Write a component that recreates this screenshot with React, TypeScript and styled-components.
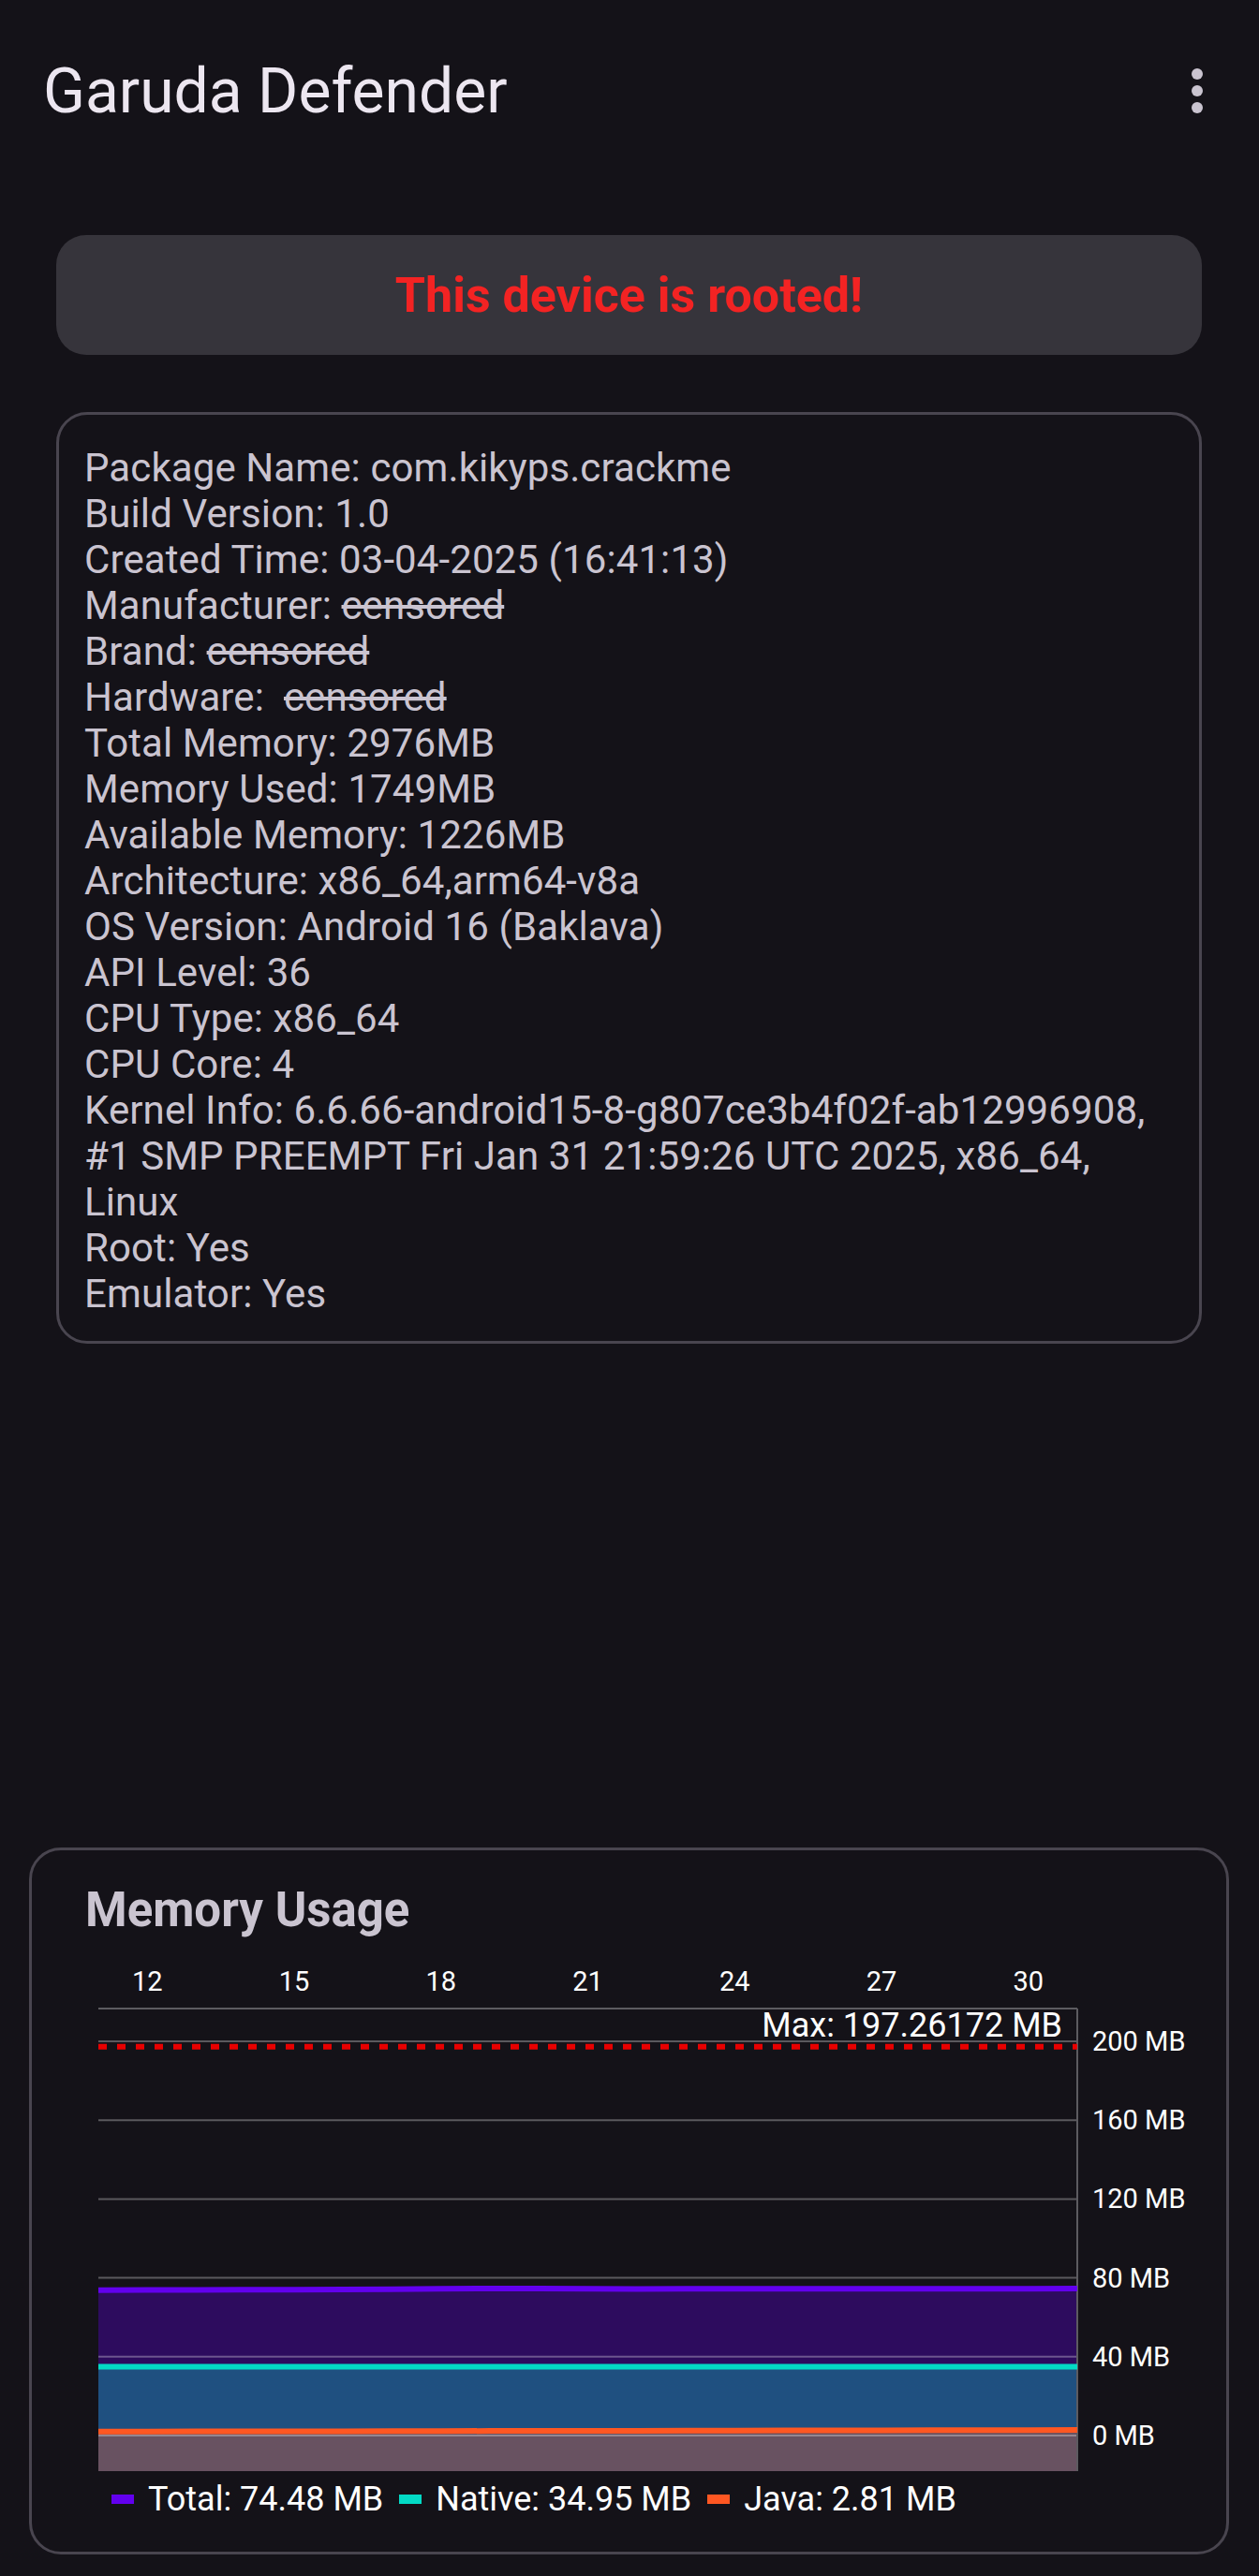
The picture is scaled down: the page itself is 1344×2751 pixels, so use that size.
import styled, { createGlobalStyle } from "styled-components";

const GlobalStyle = createGlobalStyle`
  html, body {
    margin: 0;
    padding: 0;
    background: #141218;
  }
  * {
    box-sizing: border-box;
  }
`;

const Page = styled.div`
  min-height: 2751px;
  display: flex;
  flex-direction: column;
  background: #141218;
  font-family: Roboto, "Noto Sans", sans-serif;
`;

const TopBar = styled.header`
  height: 194px;
  display: flex;
  align-items: center;
  justify-content: space-between;
  padding: 0 60px 0 46px;
`;

const Title = styled.h1`
  margin: 0;
  font-size: 66px;
  font-weight: 400;
  color: #ece6f0;
`;

const MenuButton = styled.div`
  width: 12px;
  height: 48px;
  display: flex;
  align-items: center;
  justify-content: center;
`;

const Content = styled.main`
  padding: 0 61px 0 60px;
  display: flex;
  flex-direction: column;
`;

const Banner = styled.div`
  margin-top: 57px;
  height: 128px;
  border-radius: 32px;
  background: #36343b;
  display: flex;
  align-items: center;
  justify-content: center;
  color: #f32323;
  font-size: 52px;
  font-weight: 700;
`;

const InfoCard = styled.section`
  margin-top: 61px;
  border: 3px solid #49454f;
  border-radius: 33px;
  padding: 32px 26px 26px 27px;
  color: #cac4d0;
  font-size: 42px;
  line-height: 49px;
  letter-spacing: 0.1px;
`;

const InfoLine = styled.div`
  white-space: pre;
`;

const Censored = styled.span`
  text-decoration: line-through;
`;

const MemoryCard = styled.section`
  margin: auto 32px 23px 31px;
  border: 3px solid #49454f;
  border-radius: 34px;
  padding: 35px 30px 35px 54px;
  display: flex;
  flex-direction: column;
`;

const CardTitle = styled.h2`
  margin: 0 0 12px 3px;
  font-size: 51px;
  line-height: 57px;
  font-weight: 700;
  color: #cac4d0;
`;

const ChartSvg = styled.svg`
  display: block;
  width: 1191px;
  height: 565px;
  font-family: Roboto, "Noto Sans", sans-serif;
`;

const Legend = styled.div`
  margin: 3px 0 0 31px;
  display: flex;
  align-items: center;
  gap: 17px;
  font-size: 36px;
  line-height: 42px;
  color: #ffffff;
`;

const LegendItem = styled.div`
  display: flex;
  align-items: center;
  gap: 15px;
`;

const LegendMark = styled.span<{ $color: string }>`
  width: 24px;
  height: 10px;
  background: ${({ $color }) => $color};
`;

const xs = Array.from({ length: 21 }, (_, i) => 11 + i);
const total = [73.8, 73.85, 73.9, 73.95, 74.0, 74.1, 74.25, 74.5, 74.65, 74.55, 74.45, 74.4, 74.42, 74.44, 74.45, 74.45, 74.46, 74.46, 74.47, 74.47, 74.6];
const native = xs.map(() => 34.95);
const java = xs.map((_, i) => 2.0 + (0.81 * i) / 20);

const X = (v: number) => 17 + (v - 11) * 52.25;
const Y = (v: number) => 521 - v * 2.105;
const BOTTOM = 559;

const linePath = (vals: number[]) =>
  vals.map((v, i) => `${i ? "L" : "M"}${X(xs[i]).toFixed(1)} ${Y(v).toFixed(1)}`).join(" ");
const areaPath = (vals: number[]) =>
  `${linePath(vals)} L${X(31)} ${BOTTOM} L${X(11)} ${BOTTOM} Z`;

const series = [
  { name: "Total", value: "74.48 MB", color: "#6200ee", data: total },
  { name: "Native", value: "34.95 MB", color: "#03dac5", data: native },
  { name: "Java", value: "2.81 MB", color: "#ff5722", data: java },
];

const MemoryChart = () => (
  <ChartSvg viewBox="0 0 1191 565">
    {[12, 15, 18, 21, 24, 27, 30].map((t) => (
      <text key={t} x={X(t)} y={46} fill="#fff" fontSize={29} textAnchor="middle">
        {t}
      </text>
    ))}
    {series.map((s) => (
      <path key={s.name + "a"} d={areaPath(s.data)} fill={s.color} fillOpacity={0.33} />
    ))}
    {[0, 40, 80, 120, 160, 200].map((v) => (
      <g key={v}>
        <line x1={17} x2={1062} y1={Y(v)} y2={Y(v)} stroke="#fff" strokeOpacity={0.3} strokeWidth={2} />
        <text x={1078} y={Y(v) + 10} fill="#fff" fontSize={29}>
          {v} MB
        </text>
      </g>
    ))}
    <line x1={17} x2={1062} y1={65} y2={65} stroke="#5c5b60" strokeWidth={2} />
    <line x1={1062} x2={1062} y1={65} y2={BOTTOM} stroke="#5c5b60" strokeWidth={2} />
    {series.map((s) => (
      <path key={s.name + "l"} d={linePath(s.data)} fill="none" stroke={s.color} strokeWidth={6} />
    ))}
    <line x1={17} x2={1062} y1={Y(197.26172)} y2={Y(197.26172)} stroke="#e80000" strokeWidth={6} strokeDasharray="9 11" />
    <text x={1046} y={95} fill="#fff" fontSize={36} textAnchor="end">
      Max: 197.26172 MB
    </text>
  </ChartSvg>
);

const info: [string, string, boolean?][] = [
  ["Package Name: ", "com.kikyps.crackme"],
  ["Build Version: ", "1.0"],
  ["Created Time: ", "03-04-2025 (16:41:13)"],
  ["Manufacturer: ", "censored", true],
  ["Brand: ", "censored", true],
  ["Hardware:  ", "censored", true],
  ["Total Memory: ", "2976MB"],
  ["Memory Used: ", "1749MB"],
  ["Available Memory: ", "1226MB"],
  ["Architecture: ", "x86_64,arm64-v8a"],
  ["OS Version: ", "Android 16 (Baklava)"],
  ["API Level: ", "36"],
  ["CPU Type: ", "x86_64"],
  ["CPU Core: ", "4"],
];

export default function App() {
  return (
    <Page>
      <GlobalStyle />
      <TopBar>
        <Title>Garuda Defender</Title>
        <MenuButton>
          <svg width="12" height="48" viewBox="0 0 12 48">
            <circle cx="6" cy="6" r="6" fill="#cac4d0" />
            <circle cx="6" cy="24" r="6" fill="#cac4d0" />
            <circle cx="6" cy="42" r="6" fill="#cac4d0" />
          </svg>
        </MenuButton>
      </TopBar>
      <Content>
        <Banner>This device is rooted!</Banner>
        <InfoCard>
          {info.map(([label, value, hidden]) => (
            <InfoLine key={label}>
              {label}
              {hidden ? <Censored>{value}</Censored> : value}
            </InfoLine>
          ))}
          <InfoLine>Kernel Info: 6.6.66-android15-8-g807ce3b4f02f-ab12996908,</InfoLine>
          <InfoLine>#1 SMP PREEMPT Fri Jan 31 21:59:26 UTC 2025, x86_64,</InfoLine>
          <InfoLine>Linux</InfoLine>
          <InfoLine>Root: Yes</InfoLine>
          <InfoLine>Emulator: Yes</InfoLine>
        </InfoCard>
      </Content>
      <MemoryCard>
        <CardTitle>Memory Usage</CardTitle>
        <MemoryChart />
        <Legend>
          {series.map((s) => (
            <LegendItem key={s.name}>
              <LegendMark $color={s.color} />
              <span>
                {s.name}: {s.value}
              </span>
            </LegendItem>
          ))}
        </Legend>
      </MemoryCard>
    </Page>
  );
}
